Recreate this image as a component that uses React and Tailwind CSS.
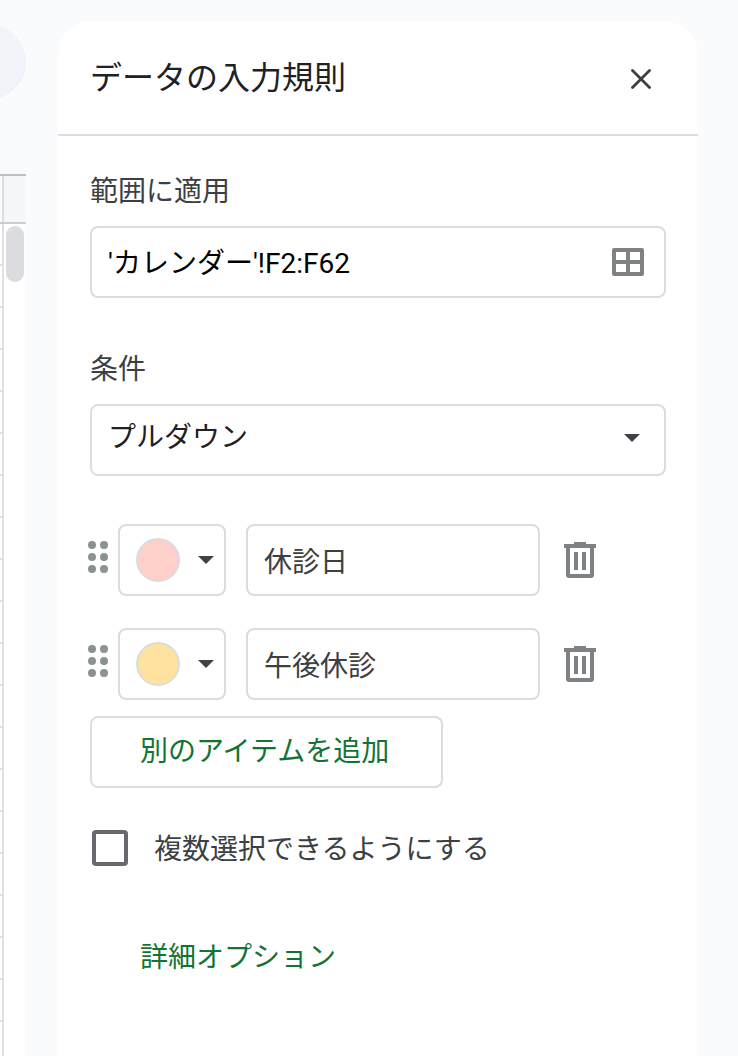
import { useState } from "react";

const ROW_COUNT = 30;

const ITEMS = [
  { id: 1, label: "休診日", color: "#ffcfc9" },
  { id: 2, label: "午後休診", color: "#ffe29e" },
];

function Caret({ className }) {
  return (
    <svg viewBox="0 0 16 8" className={`h-2 w-4 ${className || ""}`} aria-hidden="true">
      <path d="M0 0h16L8 8z" fill="#3f4246" />
    </svg>
  );
}

function CloseIcon() {
  return (
    <svg viewBox="0 0 20 20" className="h-5 w-5" fill="none" stroke="#3c4043" strokeWidth="2.8" strokeLinecap="round" aria-hidden="true">
      <path d="M1.5 1.5l17 17M18.5 1.5l-17 17" />
    </svg>
  );
}

function GridIcon() {
  return (
    <svg viewBox="0 0 32 28" className="h-7 w-8" fill="#7f8285" aria-hidden="true">
      <path fillRule="evenodd" d="M2 0h28a2 2 0 0 1 2 2v24a2 2 0 0 1-2 2H2a2 2 0 0 1-2-2V2a2 2 0 0 1 2-2zM4 4v8h10V4zM18 4v8h10V4zM4 16v8h10v-8zM18 16v8h10v-8z" />
    </svg>
  );
}

function TrashIcon() {
  return (
    <svg viewBox="0 0 32 36" className="h-9 w-8" fill="#7f8285" aria-hidden="true">
      <path fillRule="evenodd" d="M10 0h12v2h10v4h-2v27a3 3 0 0 1-3 3H5a3 3 0 0 1-3-3V6H0V2h10zM6 6v26h20V6z" />
      <path d="M10 10h4v18h-4zM18 10h4v18h-4z" />
    </svg>
  );
}

function DragHandle() {
  return (
    <svg viewBox="0 0 20 38" className="h-[38px] w-5 shrink-0" fill="#8b938e" aria-hidden="true">
      {[4, 16, 28].map((y) => (
        <g key={y}>
          <circle cx="4" cy={y} r="4" />
          <circle cx="16" cy={y} r="4" />
        </g>
      ))}
    </svg>
  );
}

function SheetEdge() {
  return (
    <div className="flex w-[26px] shrink-0 flex-col overflow-hidden">
      <div className="flex h-[174px] shrink-0 justify-end pt-6">
        <div className="h-[76px] w-[76px] shrink-0 rounded-full bg-[#f0f4f9]" />
      </div>
      <div className="flex h-[50px] shrink-0 border-y-2 border-t-[#bdc1bd] border-b-[#cbcdcf] bg-[#f5f7fa]">
        <div className="w-1 border-r-2 border-[#dcdddd] bg-[#f9fbfd]" />
      </div>
      <div className="flex min-h-0 flex-1 overflow-hidden bg-white">
        <div className="w-1 border-r-2 border-[#e1e1e1]">
          {Array.from({ length: ROW_COUNT }, (_, i) => (
            <div key={i} className="h-[42px] border-b-2 border-[#e1e1e1]" />
          ))}
        </div>
        <div className="ml-0.5 mt-0.5 h-14 w-[18px] rounded-full bg-[#dadce0]" />
      </div>
    </div>
  );
}

export default function App() {
  const [range, setRange] = useState("'カレンダー'!F2:F62");
  const [items, setItems] = useState(ITEMS);
  const [multiple, setMultiple] = useState(false);

  const updateItem = (id, label) => setItems(items.map((item) => (item.id === id ? { ...item, label } : item)));
  const removeItem = (id) => setItems(items.filter((item) => item.id !== id));
  const addItem = () => setItems([...items, { id: Date.now(), label: "", color: "#e8eaed" }]);

  return (
    <div lang="ja" className="flex h-screen overflow-hidden bg-[#f9fbfd] font-[Roboto,'Noto_Sans_CJK_JP',sans-serif] text-[28px] leading-9 text-[#3c4043]">
      <SheetEdge />

      <aside className="ml-8 mr-10 mt-[22px] min-w-0 flex-1 overflow-y-auto rounded-t-[32px] bg-white">
        <header className="flex h-[114px] items-center justify-between border-b-2 border-[#dadce0] pl-8 pr-[47px]">
          <h1 className="text-[32px] leading-10 text-[#202124]">データの入力規則</h1>
          <button type="button" aria-label="閉じる" className="pt-0.5"><CloseIcon /></button>
        </header>

        <div className="px-8 pb-8 pt-[38px]">
          <label htmlFor="range" className="block">範囲に適用</label>
          <div className="mt-4 flex h-[72px] items-center rounded-lg border-2 border-[#dadce0] pl-4 pr-5">
            <input id="range" value={range} onChange={(e) => setRange(e.target.value)} className="min-w-0 flex-1 pt-1 text-black outline-none" />
            <button type="button" aria-label="データ範囲を選択"><GridIcon /></button>
          </div>

          <label htmlFor="criteria" className="mt-[54px] block">条件</label>
          <div className="relative mt-4">
            <select id="criteria" className="block h-[72px] w-full appearance-none rounded-lg border-2 border-[#dadce0] bg-white pb-1 pl-4 pr-14 text-[#202124]">
              <option>プルダウン</option>
            </select>
            <Caret className="pointer-events-none absolute right-[26px] top-[30px]" />
          </div>

          <ul className="-ml-0.5 mt-12 flex flex-col gap-8">
            {items.map((item) => (
              <li key={item.id} className="flex items-center pr-[70px]">
                <DragHandle />
                <button type="button" aria-label="色を選択" className="ml-2.5 flex h-[72px] w-[108px] shrink-0 items-center justify-between rounded-lg border-2 border-[#dadce0] pl-4 pr-2.5">
                  <span className="h-11 w-11 rounded-full border-2 border-[#dadce0]" style={{ backgroundColor: item.color }} />
                  <Caret />
                </button>
                <input aria-label="アイテム" value={item.label} onChange={(e) => updateItem(item.id, e.target.value)} className="ml-5 h-[72px] min-w-0 flex-1 rounded-lg border-2 border-[#dadce0] px-4 outline-none" />
                <button type="button" aria-label="アイテムを削除" onClick={() => removeItem(item.id)} className="ml-6"><TrashIcon /></button>
              </li>
            ))}
          </ul>

          <button type="button" onClick={addItem} className="mt-4 block h-[72px] rounded-lg border-2 border-[#dadce0] pl-12 pr-[52px] text-[#137333]">別のアイテムを追加</button>

          <label className="mt-[42px] flex items-center gap-[26px] pl-0.5">
            <input type="checkbox" checked={multiple} onChange={(e) => setMultiple(e.target.checked)} className="h-9 w-9 shrink-0 appearance-none rounded-sm border-4 border-[#68696e] checked:bg-[#137333]" />
            <span className="-mb-1">複数選択できるようにする</span>
          </label>

          <button type="button" className="ml-[50px] mt-[74px] block text-[#137333]">詳細オプション</button>
        </div>
      </aside>
    </div>
  );
}
